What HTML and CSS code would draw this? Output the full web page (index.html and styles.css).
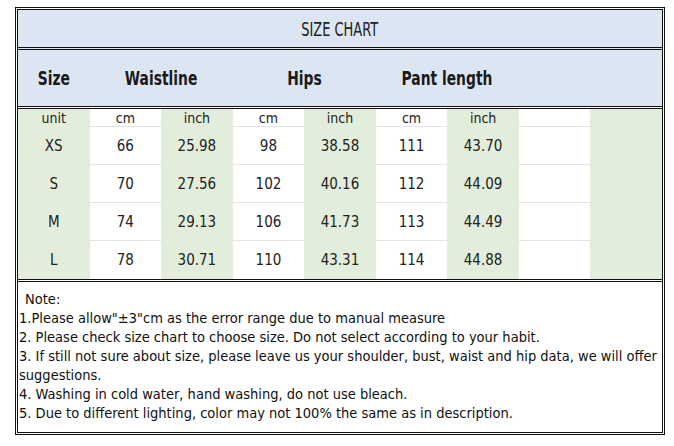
FILE: index.html
```html
<!DOCTYPE html>
<html>
<head>
<meta charset="utf-8">
<link rel="stylesheet" href="styles.css">
</head>
<body>
<div class="chart">
  <div class="title"><span class="narrow">SIZE CHART</span></div>
  <div class="head">
    <div class="hcell"><span class="narrow">Size</span></div>
    <div class="hcell span2"><span class="narrow">Waistline</span></div>
    <div class="hcell span2"><span class="narrow">Hips</span></div>
    <div class="hcell span2"><span class="narrow">Pant length</span></div>
    <div class="hcell span2"></div>
  </div>
  <div class="data">
    <div class="col g"><div class="u">unit</div><div class="r">XS</div><div class="r">S</div><div class="r">M</div><div class="r">L</div></div>
    <div class="col w"><div class="u">cm</div><div class="r">66</div><div class="r">70</div><div class="r">74</div><div class="r">78</div></div>
    <div class="col g"><div class="u">inch</div><div class="r">25.98</div><div class="r">27.56</div><div class="r">29.13</div><div class="r">30.71</div></div>
    <div class="col w"><div class="u">cm</div><div class="r">98</div><div class="r">102</div><div class="r">106</div><div class="r">110</div></div>
    <div class="col g"><div class="u">inch</div><div class="r">38.58</div><div class="r">40.16</div><div class="r">41.73</div><div class="r">43.31</div></div>
    <div class="col w"><div class="u">cm</div><div class="r">111</div><div class="r">112</div><div class="r">113</div><div class="r">114</div></div>
    <div class="col g"><div class="u">inch</div><div class="r">43.70</div><div class="r">44.09</div><div class="r">44.49</div><div class="r">44.88</div></div>
    <div class="col w"><div class="u"></div><div class="r"></div><div class="r"></div><div class="r"></div><div class="r"></div></div>
    <div class="col g"><div class="u"></div><div class="r"></div><div class="r"></div><div class="r"></div><div class="r"></div></div>
  </div>
  <div class="notes">
    <p class="note-head">Note:</p>
    <p>1.Please allow"±3"cm as the error range due to manual measure</p>
    <p>2. Please check size chart to choose size. Do not select according to your habit.</p>
    <p>3. If still not sure about size, please leave us your shoulder, bust, waist and hip data, we will offer suggestions.</p>
    <p>4. Washing in cold water, hand washing, do not use bleach.</p>
    <p>5. Due to different lighting, color may not 100% the same as in description.</p>
  </div>
</div>
</body>
</html>
```
FILE: styles.css
```css
html, body {
  margin: 0;
  background: #ffffff;
}
body {
  padding: 7px 0 0 15px;
}
.chart {
  box-sizing: border-box;
  width: 650px;
  height: 428px;
  border: 3px double #111;
  display: flex;
  flex-direction: column;
  color: #111;
}
.narrow {
  display: inline-block;
  transform: scaleX(0.77);
  white-space: nowrap;
}
.title {
  height: 37px;
  background: #dce6f2;
  display: flex;
  align-items: center;
  justify-content: center;
  font-family: "DejaVu Sans Condensed", "DejaVu Sans", sans-serif;
  font-size: 19px;
  color: #222;
}
.title .narrow {
  transform: scaleX(0.76);
}
.head {
  height: 56px;
  border-top: 3px double #111;
  background: #dce6f2;
  display: grid;
  grid-template-columns: repeat(9, 1fr);
  font-family: "DejaVu Sans Condensed", "DejaVu Sans", sans-serif;
  font-weight: bold;
  font-size: 20px;
  color: #1a1a1a;
}
.hcell {
  display: flex;
  align-items: center;
  justify-content: center;
}
.span2 {
  grid-column: span 2;
}
.data {
  height: 170px;
  border-top: 3px double #111;
  display: grid;
  grid-template-columns: repeat(9, 1fr);
  font-family: "DejaVu Sans Condensed", "DejaVu Sans", sans-serif;
  font-size: 15px;
  color: #222;
}
.col {
  display: flex;
  flex-direction: column;
}
.g {
  background: #e2eedb;
}
.w {
  background: #ffffff;
}
.u {
  height: 18px;
  display: flex;
  align-items: center;
  justify-content: center;
  font-size: 14px;
}
.r {
  height: 38px;
  display: flex;
  align-items: center;
  justify-content: center;
}
.w .u, .w .r {
  border-bottom: 1px solid #e4e4e4;
  box-sizing: border-box;
}
.w .r:last-child {
  border-bottom: none;
}
.notes {
  flex: 1;
  border-top: 3px double #111;
  padding: 8px 0 0 1px;
  font-family: "DejaVu Sans Condensed", "DejaVu Sans", sans-serif;
  font-size: 14.5px;
  line-height: 19px;
  color: #111;
}
.notes p {
  margin: 0;
}
.note-head {
  padding-left: 6px;
}
```
